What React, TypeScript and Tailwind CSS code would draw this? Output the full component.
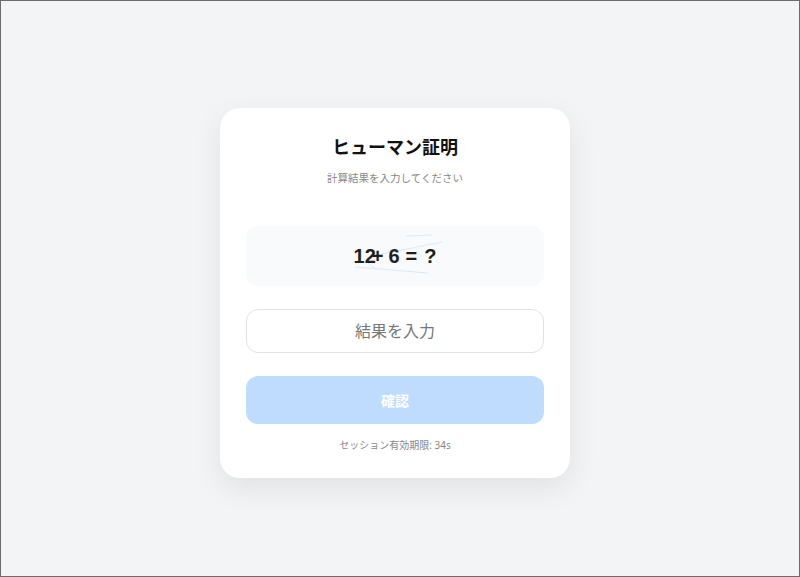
import React from "react";

export default function App() {
  const font = { fontFamily: '"Noto Sans", "Noto Sans CJK JP", sans-serif' };
  return (
    <div
      className="w-[800px] h-[577px] bg-[#f3f4f6] border border-[#6b6b6b] flex items-start justify-start"
      style={font}
    >
      <div className="ml-[219px] mt-[107px] w-[350px] bg-white rounded-[20px] shadow-[0_10px_30px_rgba(0,0,0,0.08)] px-[26px] pt-[26px] pb-[26px] flex flex-col items-center">
        <h1 className="text-[18px] leading-[27px] font-bold text-[#111]">ヒューマン証明</h1>
        <p className="mt-[9px] text-[10.5px] leading-[16px] text-[#888]">計算結果を入力してください</p>

        <div className="relative mt-[40px] w-full h-[60px] rounded-[12px] bg-[#f8fafc] flex items-center justify-center overflow-hidden">
          <svg className="absolute inset-0" width="298" height="60" viewBox="0 0 298 60">
            <line x1="160" y1="10" x2="186" y2="9" stroke="#dbeafe" strokeWidth="1" />
            <line x1="136" y1="28" x2="196" y2="16" stroke="#dbeafe" strokeWidth="1" />
            <line x1="109" y1="41" x2="182" y2="47" stroke="#dbeafe" strokeWidth="1" />
            <line x1="118" y1="34" x2="131" y2="44" stroke="#dbeafe" strokeWidth="1" />
          </svg>
          <div
            className="relative flex items-center text-[20px] font-bold text-[#1f1f1f] leading-none"
            style={{ fontFamily: '"Liberation Sans", Arial, sans-serif' }}
          >
            <span>1</span>
            <span>2</span>
            <span className="ml-[-4px]">+</span>
            <span className="ml-[5px]">6</span>
            <span className="ml-[6px]">=</span>
            <span className="ml-[7px]">?</span>
          </div>
        </div>

        <input
          className="mt-[23px] w-full h-[44px] rounded-[12px] border border-[#e2e2e2] text-center text-[16px] text-[#333] placeholder:text-[#777] outline-none"
          placeholder="結果を入力"
          style={font}
        />

        <button className="mt-[23px] w-full h-[48px] rounded-[12px] bg-[#bfdcfe] text-white text-[14px] font-bold" style={font}>
          確認
        </button>

        <p className="mt-[14px] text-[10px] leading-[14px] text-[#888]">セッション有効期限: 34s</p>
      </div>
    </div>
  );
}
